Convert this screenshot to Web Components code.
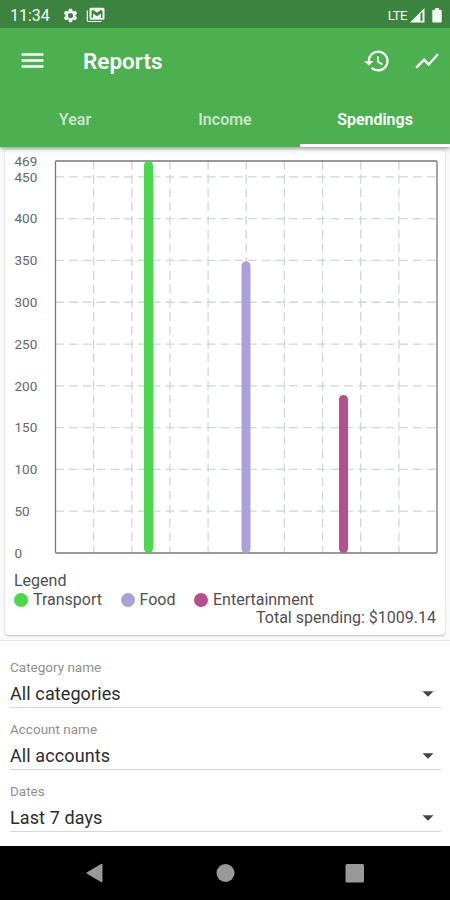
<!DOCTYPE html>
<html lang="en">
<head>
<meta charset="utf-8">
<title>Reports</title>
<style>
    html, body { margin: 0; height: 100%; }
    body {
        font-family: Roboto, "Liberation Sans", sans-serif;
        background: #fff;
        color: #333;
        overflow: hidden;
    }
</style>
</head>
<body>
<report-screen></report-screen>

<script>
class StatusBar extends HTMLElement {
    constructor() {
        super();
        this.attachShadow({ mode: 'open' });
        this.shadowRoot.innerHTML = `
        <style>
            :host {
                display: flex;
                align-items: center;
                box-sizing: border-box;
                height: 28px;
                padding: 2px 8px 0 10px;
                background: #3b833e;
                color: #f4fbf4;
                font-size: 16px;
            }
            svg { display: block; fill: currentColor; }
            .gear { margin-left: 12px; }
            .mail { margin-left: 7px; }
            .lte { margin-left: auto; font-size: 13px; letter-spacing: -0.4px; }
            .signal { margin-left: 3px; }
            .battery { margin-left: 7px; }
        </style>
        <span>11:34</span>
        <svg class="gear" width="17" height="17" viewBox="0 0 24 24"><path d="M19.14 12.94c.04-.3.06-.61.06-.94s-.02-.64-.07-.94l2.03-1.58a.49.49 0 0 0 .12-.61l-1.92-3.32a.49.49 0 0 0-.59-.22l-2.39.96a7 7 0 0 0-1.62-.94l-.36-2.54a.48.48 0 0 0-.48-.41h-3.84a.48.48 0 0 0-.47.41l-.36 2.54a7.3 7.3 0 0 0-1.62.94l-2.39-.96a.48.48 0 0 0-.59.22L2.74 8.87a.48.48 0 0 0 .12.61l2.03 1.58a6 6 0 0 0-.02 1.88l-2.03 1.58a.49.49 0 0 0-.12.61l1.92 3.32c.12.22.37.29.59.22l2.39-.96c.5.38 1.03.7 1.62.94l.36 2.54c.05.24.24.41.48.41h3.84c.24 0 .44-.17.47-.41l.36-2.54a7 7 0 0 0 1.62-.94l2.39.96c.22.08.47 0 .59-.22l1.92-3.32a.48.48 0 0 0-.12-.61zM12 15.6a3.6 3.6 0 1 1 0-7.2 3.6 3.6 0 0 1 0 7.2z"/></svg>
        <svg class="mail" width="19" height="16" viewBox="0 0 19 16">
            <path d="M1.3 3.5V13a1.5 1.5 0 0 0 1.5 1.5h12.7" fill="none" stroke="currentColor" stroke-width="1.2"/>
            <path fill-rule="evenodd" d="M5 .7h12a1.5 1.5 0 0 1 1.5 1.5v9a1.5 1.5 0 0 1-1.5 1.5H5a1.5 1.5 0 0 1-1.5-1.5v-9A1.5 1.5 0 0 1 5 .7zM5.500 4v7h1.500V6.500l4 2.700 4-2.700V11h1.500V4L15 2.700 11 5.700 7 2.700z"/>
        </svg>
        <span class="lte">LTE</span>
        <svg class="signal" width="15" height="15" viewBox="0 0 15 15"><path fill-rule="evenodd" d="M0 14.500 14.500 0v14.500zM10.500 5.800V13h2V3.800z"/></svg>
        <svg class="battery" width="10" height="15" viewBox="0 0 10 15"><path d="M3 0h4v1.700h1.500q1.200 0 1.200 1.200v10.400q0 1.200-1.200 1.200h-7Q.3 14.500.3 13.300V2.900q0-1.200 1.200-1.200H3z"/></svg>`;
    }
}

class AppBar extends HTMLElement {
    constructor() {
        super();
        this.attachShadow({ mode: 'open' });
        this.shadowRoot.innerHTML = `
        <style>
            :host {
                display: flex;
                align-items: center;
                box-sizing: border-box;
                height: 66px;
                padding: 0 9px 1px 18px;
                background: #4caf50;
                color: #fff;
            }
            svg { display: block; fill: currentColor; }
            h1 {
                flex: 1;
                margin: 0 0 0 36px;
                font-size: 22.5px;
                font-weight: 600;
            }
            .history { margin-right: 22px; }
        </style>
        <svg width="29" height="29" viewBox="0 0 24 24"><path d="M3 18h18v-2H3v2zm0-5h18v-2H3v2zm0-7v2h18V6H3z"/></svg>
        <h1><slot></slot></h1>
        <svg class="history" width="28" height="28" viewBox="0 0 24 24"><path d="M13 3a9 9 0 0 0-9 9H1l3.890 3.890.070.140L9 12H6a7 7 0 1 1 2.060 4.940l-1.420 1.420A9 9 0 1 0 13 3zm-1 5v5l4.280 2.540.720-1.210-3.500-2.080V8H12z"/></svg>
        <svg width="28" height="28" viewBox="0 0 24 24"><path d="M3.500 18.490l6-6.010 4 4L22 6.920l-1.410-1.410-7.090 7.970-4-4L2 16.990z"/></svg>`;
    }
}

class TabItem extends HTMLElement {
    constructor() {
        super();
        this.attachShadow({ mode: 'open' });
        this.shadowRoot.innerHTML = `
        <style>
            :host {
                display: flex;
                flex: 1;
                align-items: center;
                justify-content: center;
                box-sizing: border-box;
                border-bottom: 3px solid transparent;
                color: rgba(255, 255, 255, 0.7);
                font-size: 16px;
                font-weight: 600;
            }
            :host([active]) {
                color: #fff;
                border-bottom-color: #fff;
            }
        </style>
        <slot></slot>`;
    }
}

class TabBar extends HTMLElement {
    constructor() {
        super();
        this.attachShadow({ mode: 'open' });
        this.shadowRoot.innerHTML = `
        <style>
            :host {
                display: flex;
                position: relative;
                height: 53px;
                background: #4caf50;
                box-shadow: 0 1px 5px rgba(0, 0, 0, 0.5);
                clip-path: inset(0 0 -10px 0); /* shadow only below the bar */
            }
        </style>
        <slot></slot>`;
    }
}

//Bars look like "148.5:469:#4cd84f" -> centre x, value, colour
class BarChart extends HTMLElement {
    constructor() {
        super();
        this.attachShadow({ mode: 'open' });
    }

    connectedCallback() {
        const max = Number(this.getAttribute('max'));
        const bars = this.getAttribute('bars').split(' ').map(b => b.split(':'));
        const left = 50.5, right = 432, top = 11, bottom = 403;
        const y = value => bottom - (bottom - top) * value / max;
        let grid = '';
        let labels = `<text x="9.5" y="${top + 4.5}">${max}</text>`;

        for (let v = 0; v < max; v += 50) {
            if (v > 0) {
                grid += `<path d="M${left} ${y(v)}H${right}"/>`;
            }
            labels += `<text x="9.5" y="${y(v) + 4.7}">${v}</text>`;
        }
        for (let i = 1; i < 10; i++) {
            grid += `<path d="M${left + (right - left) * i / 10} ${top}V${bottom}"/>`;
        }

        this.shadowRoot.innerHTML = `
        <style>
            :host { display: block; height: 420px; }
            svg { display: block; }
            text { font-size: 13.5px; fill: #666; }
            .grid { stroke: #d0d5d5; stroke-width: 1.3; stroke-dasharray: 8.7 5.05; fill: none; }
            .frame { stroke: #777; stroke-width: 1.3; fill: none; }
            .bars { stroke-width: 9; stroke-linecap: round; }
        </style>
        <svg width="440" height="420">
            <g class="grid">${grid}</g>
            <rect class="frame" x="${left}" y="${top}" width="${right - left}" height="${bottom - top}" rx="1"/>
            <g class="bars">${bars.map(([x, v, c]) => `<path stroke="${c}" d="M${x} ${y(v) + 4.5}V${bottom - 4.5}"/>`).join('')}</g>
            ${labels}
        </svg>`;
    }
}

class LegendItem extends HTMLElement {
    constructor() {
        super();
        this.attachShadow({ mode: 'open' });
        this.shadowRoot.innerHTML = `
        <style>
            :host { display: flex; align-items: center; gap: 5px; }
            i { width: 14px; height: 14px; border-radius: 50%; background: var(--dot); }
        </style>
        <i></i><span><slot></slot></span>`;
    }
}

class ReportCard extends HTMLElement {
    constructor() {
        super();
        this.attachShadow({ mode: 'open' });
        this.shadowRoot.innerHTML = `
        <style>
            :host {
                display: block;
                box-sizing: border-box;
                height: 485px;
                margin: 3px 5px 5px;
                border-radius: 4px;
                background: #fff;
                box-shadow: 0 1px 2px rgba(0, 0, 0, 0.25);
                font-size: 16px;
                line-height: 18.5px;
                color: #505050;
            }
            .title { padding-left: 9px; margin-top: 2px; }
            .legend { display: flex; gap: 18.5px; padding-left: 9px; }
            .total { text-align: right; padding-right: 9px; }
        </style>
        <slot name="chart"></slot>
        <div class="title">Legend</div>
        <div class="legend"><slot></slot></div>
        <div class="total"><slot name="total"></slot></div>`;
    }
}

class SelectField extends HTMLElement {
    constructor() {
        super();
        this.attachShadow({ mode: 'open' });
        this.shadowRoot.innerHTML = `
        <style>
            :host {
                display: block;
                box-sizing: border-box;
                height: 62px;
                padding-top: 13px;
                border-bottom: 1px solid #d6d6d6;
            }
            .label { font-size: 13.5px; line-height: 16px; color: #8f8f8f; }
            .value {
                display: flex;
                align-items: center;
                justify-content: space-between;
                height: 37px;
                padding-right: 7.5px;
                font-size: 18px;
                letter-spacing: 0.1px;
                color: #2c2c2c;
            }
            svg { fill: #444; }
        </style>
        <div class="label"></div>
        <div class="value"><slot></slot><svg width="12" height="6" viewBox="0 0 12 6"><path d="M.5.3h11L6 5.800z"/></svg></div>`;
    }

    connectedCallback() {
        this.shadowRoot.querySelector('.label').textContent = this.getAttribute('label');
    }
}

class NavBar extends HTMLElement {
    constructor() {
        super();
        this.attachShadow({ mode: 'open' });
        this.shadowRoot.innerHTML = `
        <style>
            :host {
                display: flex;
                align-items: center;
                justify-content: center;
                gap: 110px;
                height: 54px;
                background: #000;
            }
            svg { fill: #999; }
        </style>
        <svg width="20" height="20"><path d="M2 9.200 16 .9q1.500-.8 1.500.9v16.400q0 1.700-1.500.9L2 10.800q-1.200-.8 0-1.600z"/></svg>
        <svg width="20" height="20"><circle cx="10.500" cy="10" r="9"/></svg>
        <svg width="20" height="20"><rect x=".5" y="1" width="18.500" height="18.500" rx="1.500"/></svg>`;
    }
}

class ReportScreen extends HTMLElement {
    constructor() {
        super();
        this.attachShadow({ mode: 'open' });
        this.shadowRoot.innerHTML = `
        <style>
            :host { display: flex; flex-direction: column; width: 450px; height: 900px; }
            main { display: flow-root; height: 493px; background: #fafafa; border-bottom: 1px solid #e8e8e8; }
            .filters { flex: 1; padding: 5px 9px 0 10px; background: #fff; }
        </style>
        <status-bar></status-bar>
        <app-bar>Reports</app-bar>
        <tab-bar>
            <tab-item>Year</tab-item>
            <tab-item>Income</tab-item>
            <tab-item active>Spendings</tab-item>
        </tab-bar>
        <main>
            <report-card>
                <bar-chart slot="chart" max="469" bars="143.5:469:#4bd84e 241:349:#aca0d8 338.5:189:#b4508c"></bar-chart>
                <legend-item style="--dot: #4bd84e">Transport</legend-item>
                <legend-item style="--dot: #aca0d8">Food</legend-item>
                <legend-item style="--dot: #b4508c">Entertainment</legend-item>
                <span slot="total">Total spending: $1009.14</span>
            </report-card>
        </main>
        <div class="filters">
            <select-field label="Category name">All categories</select-field>
            <select-field label="Account name">All accounts</select-field>
            <select-field label="Dates">Last 7 days</select-field>
        </div>
        <nav-bar></nav-bar>`;
    }
}

customElements.define('status-bar', StatusBar);
customElements.define('app-bar', AppBar);
customElements.define('tab-item', TabItem);
customElements.define('tab-bar', TabBar);
customElements.define('bar-chart', BarChart);
customElements.define('legend-item', LegendItem);
customElements.define('report-card', ReportCard);
customElements.define('select-field', SelectField);
customElements.define('nav-bar', NavBar);
customElements.define('report-screen', ReportScreen);
</script>
</body>
</html>
